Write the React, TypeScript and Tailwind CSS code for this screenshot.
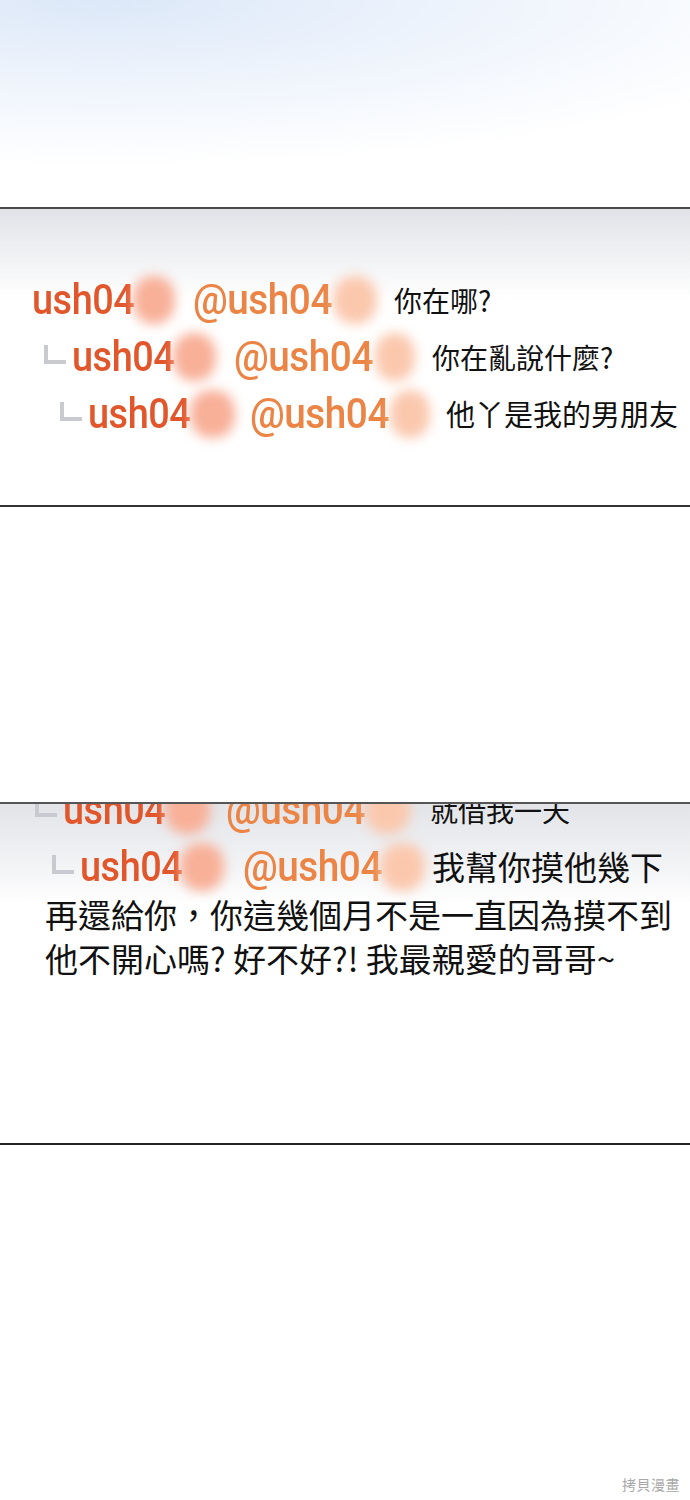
const latin = "font-['Roboto','Liberation_Sans',sans-serif]";
const cjk = "font-['Noto_Sans_CJK_TC','Noto_Sans_CJK_SC',sans-serif]";

function Name({ text, w, color, scale }: { text: string; w: string; color: string; scale: string }) {
  return (
    <span className={`${w} shrink-0 overflow-visible whitespace-nowrap ${latin}`}>
      <span className={`inline-block origin-left ${scale} text-[43px] ${color} font-medium leading-none tracking-[-0.5px]`}>{text}</span>
    </span>
  );
}

function Blob({ w, tint }: { w: string; tint: string }) {
  return <span className={`${w} h-[48px] shrink-0 rounded-[45%] ${tint} blur-[6px]`} />;
}

function Corner() {
  return <span className="mr-[6px] h-[19px] w-[22px] shrink-0 translate-y-[-2px] border-b-4 border-l-4 border-[#c9cacf]" />;
}

type Row = {
  pl: string;
  corner?: boolean;
  nameW: string;
  blob1: string;
  gap1: string;
  atW: string;
  blob2: string;
  gap2: string;
  msg: string;
  msgSize: string;
};

function CommentRow({ r }: { r: Row }) {
  return (
    <div className={`flex h-[57px] items-center ${r.pl}`}>
      {r.corner && <Corner />}
      <Name text="ush04" w={r.nameW} color="text-[#e2562b]" scale="scale-x-[0.88]" />
      <Blob w={r.blob1} tint="bg-[#f8b098]" />
      <span className={r.gap1} />
      <Name text="@ush04" w={r.atW} color="text-[#eb8444]" scale="scale-x-[0.9]" />
      <Blob w={r.blob2} tint="bg-[#fbc8ae]" />
      <span className={r.gap2} />
      <span className={`${cjk} ${r.msgSize} whitespace-nowrap leading-none text-[#111]`}>{r.msg}</span>
    </div>
  );
}

const panelOne: Row[] = [
  { pl: "pl-[32px]", nameW: "w-[101px]", blob1: "w-[42px]", gap1: "w-[18px]", atW: "w-[140px]", blob2: "w-[44px]", gap2: "w-[17px]", msg: "你在哪?", msgSize: "text-[28px]" },
  { pl: "pl-[44px]", corner: true, nameW: "w-[101px]", blob1: "w-[43px]", gap1: "w-[18px]", atW: "w-[141px]", blob2: "w-[40px]", gap2: "w-[17px]", msg: "你在亂說什麼?", msgSize: "text-[28px]" },
  { pl: "pl-[60px]", corner: true, nameW: "w-[102px]", blob1: "w-[45px]", gap1: "w-[15px]", atW: "w-[140px]", blob2: "w-[40px]", gap2: "w-[16px]", msg: "他丫是我的男朋友", msgSize: "text-[29px]" },
];

const panelTwo: Row[] = [
  { pl: "pl-[35px]", corner: true, nameW: "w-[102px]", blob1: "w-[45px]", gap1: "w-[16px]", atW: "w-[139px]", blob2: "w-[45px]", gap2: "w-[20px]", msg: "就借我一天", msgSize: "text-[28px]" },
  { pl: "pl-[52px]", corner: true, nameW: "w-[100px]", blob1: "w-[44px]", gap1: "w-[19px]", atW: "w-[137px]", blob2: "w-[45px]", gap2: "w-[7px]", msg: "我幫你摸他幾下", msgSize: "text-[33px]" },
];

export default function App() {
  return (
    <div className="flex min-h-[1500px] w-[690px] flex-col bg-white">
      <div className="h-[207px] bg-[radial-gradient(ellipse_110%_80%_at_15%_0%,#dce8f8_0%,#edf3fc_45%,#ffffff_100%)]" />

      <div className="h-[300px] overflow-hidden border-t-2 border-b-2 border-t-[#4a4a4a] border-b-[#333] bg-[linear-gradient(to_bottom,#e1e3e8_0%,#f3f4f6_55px,#ffffff_90px)] pt-[62px]">
        {panelOne.map((r) => (
          <CommentRow key={r.msg} r={r} />
        ))}
      </div>

      <div className="h-[295px]" />

      <div className="h-[343px] overflow-hidden border-t-2 border-b-2 border-t-[#555] border-b-[#222] bg-[linear-gradient(to_bottom,#e3e4e8_0%,#f2f3f5_60px,#ffffff_100px)]">
        <div className="mt-[-23px]">
          {panelTwo.map((r) => (
            <CommentRow key={r.msg} r={r} />
          ))}
        </div>
        <div className={`mt-[-3px] pl-[45px] ${cjk} text-[33px] leading-[44px] text-[#111]`}>
          <p>再還給你，你這幾個月不是一直因為摸不到</p>
          <p>他不開心嗎? 好不好?! 我最親愛的哥哥~</p>
        </div>
      </div>

      <div className="flex flex-1 items-end justify-end pb-[9px] pr-[10px]">
        <span className={`${cjk} text-[14px] leading-none tracking-[0.5px] text-[#a8a8a8]`}>拷貝漫畫</span>
      </div>
    </div>
  );
}
